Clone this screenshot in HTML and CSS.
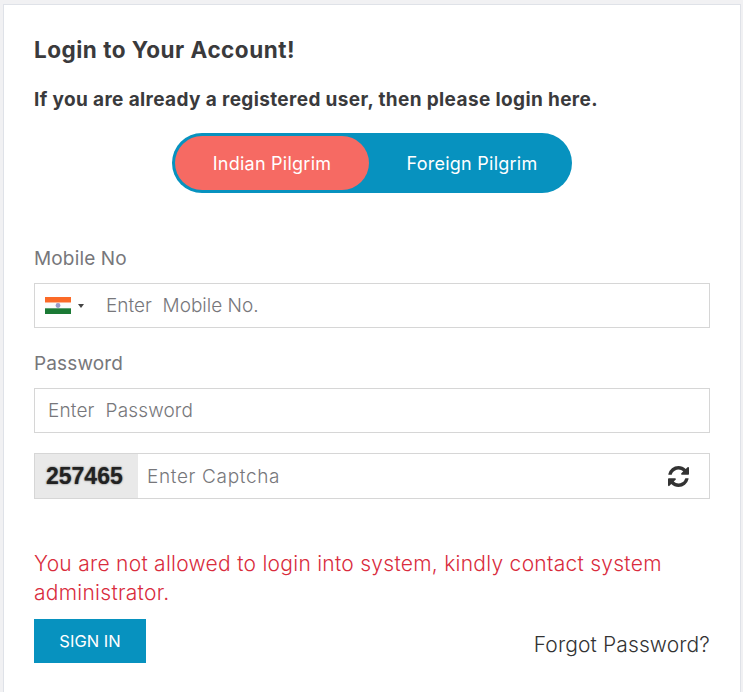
FILE: index.html
```html
<!DOCTYPE html>
<html lang="en">
<head>
<meta charset="utf-8">
<title>Login</title>
<link rel="stylesheet" href="styles.css">
</head>
<body>
<main class="card">
  <h1 class="title">Login to Your Account!</h1>
  <p class="subtitle">If you are already a registered user, then please login here.</p>
  <div class="toggle">
    <button class="toggle-opt active" type="button">Indian Pilgrim</button>
    <button class="toggle-opt second" type="button">Foreign Pilgrim</button>
  </div>
  <label class="label first">Mobile No</label>
  <div class="field">
    <div class="country">
      <svg class="flag" viewBox="0 0 26 17" width="26" height="17" aria-hidden="true">
        <rect width="26" height="5.7" fill="#fb6a28"/>
        <rect y="5.7" width="26" height="5.6" fill="#fbfbfb"/>
        <rect y="11.3" width="26" height="5.7" fill="#1b7a35"/>
        <circle cx="13" cy="8.5" r="2.4" fill="#9a9ac8"/>
      </svg>
      <span class="caret"></span>
    </div>
    <input class="input mobile" type="text" placeholder="Enter  Mobile No.">
  </div>
  <label class="label">Password</label>
  <div class="field">
    <input class="input pass" type="text" placeholder="Enter  Password">
  </div>
  <div class="field captcha">
    <div class="code">257465</div>
    <input class="input cap" type="text" placeholder="Enter Captcha">
    <svg class="refresh" viewBox="128 128 1536 1536" width="21" height="21" aria-hidden="true"><path fill="#333" d="M1639 1056q0 5-1 7-64 268-268 434.5t-478 166.5q-146 0-282.5-55t-243.5-157l-129 129q-19 19-45 19t-45-19-19-45v-448q0-26 19-45t45-19h448q26 0 45 19t19 45-19 45l-137 137q71 66 161 102t187 36q134 0 250-65t186-179q11-17 53-117 8-23 30-23h192q13 0 22.5 9.5t9.5 22.5zm25-800v448q0 26-19 45t-45 19h-448q-26 0-45-19t-19-45 19-45l138-138q-148-137-349-137-134 0-250 65t-186 179q-11 17-53 117-8 23-30 23h-199q-13 0-22.5-9.5t-9.5-22.5v-7q65-268 270-434.5t480-166.5q146 0 284 55.5t245 156.5l130-129q19-19 45-19t45 19 19 45z"/></svg>
  </div>
  <p class="error">You are not allowed to login into system, kindly contact system administrator.</p>
  <div class="actions">
    <button class="signin" type="button">SIGN IN</button>
    <a class="forgot" href="#">Forgot Password?</a>
  </div>
</main>
</body>
</html>
```
FILE: styles.css
```css
* { box-sizing: border-box; }
html, body { margin: 0; height: 100%; overflow: hidden; }
body {
  background: #f1f1f3;
  font-family: Inter, "Liberation Sans", sans-serif;
  padding: 4px 2px 0 3px;
}
.card {
  background: #fff;
  border: 1px solid #dfe2e8;
  border-bottom: 0;
  padding: 30px 30px 0;
  height: 688px;
}
.title {
  margin: 0;
  font-size: 22.5px;
  letter-spacing: 0.5px;
  line-height: 30px;
  font-weight: 700;
  color: #3a3a3c;
}
.subtitle {
  margin: 21px 0 0;
  font-size: 19px;
  letter-spacing: 0.37px;
  line-height: 28px;
  font-weight: 700;
  color: #3a3a3c;
}
.toggle {
  display: flex;
  width: 400px;
  height: 60px;
  margin: 19px 0 0 138px;
  padding: 3px;
  border-radius: 30px;
  background: #0792bf;
}
.toggle-opt {
  width: 200px;
  border: 0;
  border-radius: 27px;
  background: none;
  color: #fff;
  font: 400 18px Inter, "Liberation Sans", sans-serif;
  letter-spacing: 0.25px;
  padding: 0;
}
.toggle-opt.active { width: 194px; background: #f66a63; }
.toggle-opt.second { padding-left: 6px; }
.label {
  display: block;
  margin: 0 0 12px;
  padding-top: 23px;
  font-size: 19px;
  letter-spacing: 0.15px;
  line-height: 25px;
  color: #77777b;
}
.label.first { padding-top: 53px; }
.field {
  display: flex;
  align-items: center;
  width: 676px;
  height: 45px;
  border: 1px solid #d6d6d6;
  background: #fff;
}
.country {
  display: flex;
  align-items: center;
  gap: 7px;
  width: 70px;
  padding-left: 10px;
  flex: none;
}
.caret {
  border-left: 3px solid transparent;
  border-right: 3px solid transparent;
  border-top: 4px solid #444;
}
.input {
  flex: 1;
  min-width: 0;
  height: 100%;
  border: 0;
  outline: 0;
  background: none;
  padding: 0 0 0 1px;
  font: 300 19px Inter, "Liberation Sans", sans-serif;
  letter-spacing: 0.15px;
  color: #555;
}
.input::placeholder { color: #77777b; opacity: 1; font-weight: 300; white-space: pre; }
.mobile { letter-spacing: 0; }
.pass { padding-left: 13px; }
.captcha { margin-top: 20px; height: 46px; }
.code {
  flex: none;
  width: 103px;
  height: 100%;
  background: #e9e9e9;
  font: 700 23px/44px "Liberation Sans", sans-serif;
  color: #222;
  padding-left: 11px;
  text-shadow: 0 0 2px #555;
}
.cap { padding-left: 9px; letter-spacing: 0.65px; }
.refresh { flex: none; margin: 0 20px 0 8px; }
.error {
  margin: 50px 0 0;
  font-size: 21px;
  letter-spacing: 0.27px;
  line-height: 29px;
  font-weight: 300;
  color: #d92c3d;
}
.actions {
  display: flex;
  align-items: center;
  justify-content: space-between;
  margin-top: 12px;
}
.signin {
  width: 112px;
  height: 44px;
  border: 0;
  padding: 0;
  background: #0792bf;
  color: #fff;
  font: 400 16.5px Inter, "Liberation Sans", sans-serif;
}
.forgot {
  margin-top: 6px;
  font-size: 21px;
  letter-spacing: 0.12px;
  font-weight: 300;
  color: #333;
  text-decoration: none;
}
```
